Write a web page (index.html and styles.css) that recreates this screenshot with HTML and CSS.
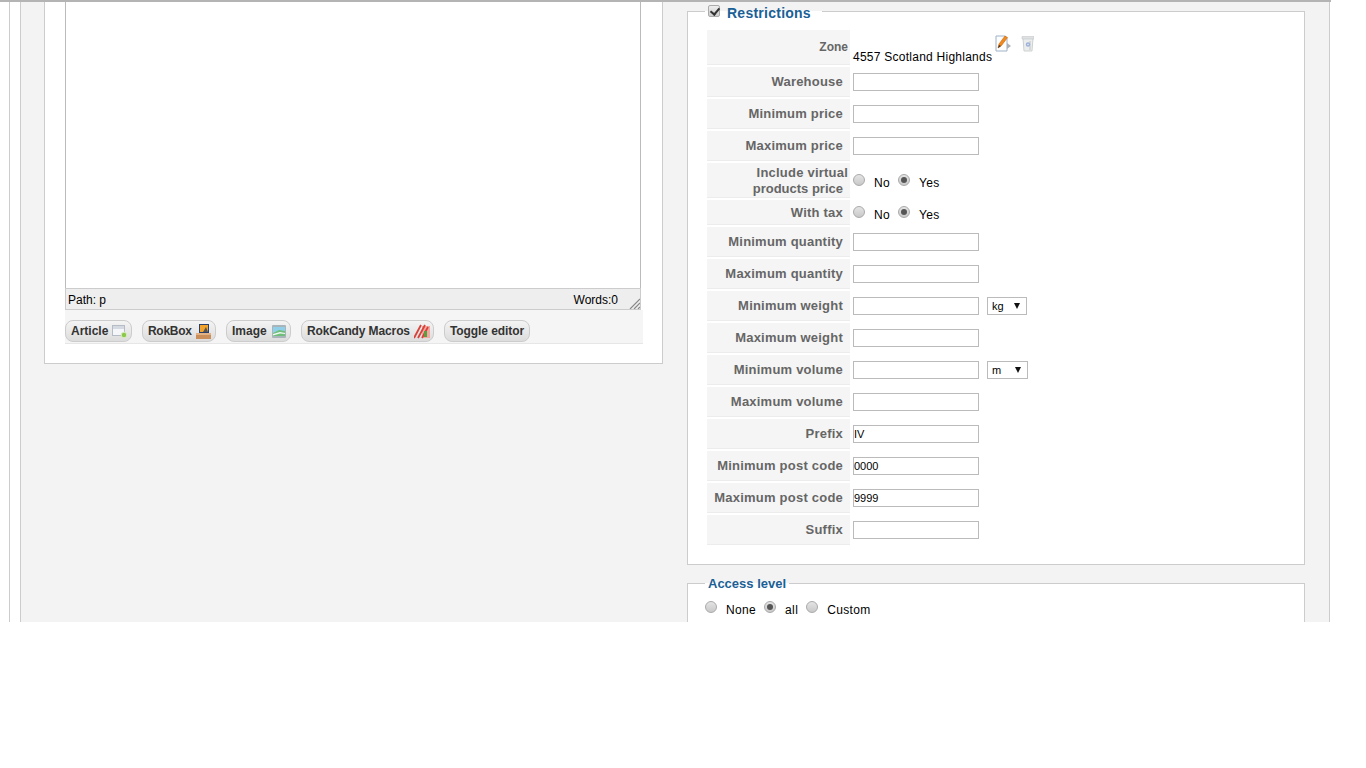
FILE: index.html
```html
<!DOCTYPE html>
<html lang="en">
<head>
<meta charset="utf-8">
<title>Shipping method</title>
<link rel="stylesheet" href="styles.css">
</head>
<body>
<div class="page">
  <div class="outer">
    <div class="main">
      <section class="left">
        <div class="panel">
          <div class="editor">
            <div class="edit-area"></div>
            <div class="statusbar">
              <span>Path: p</span>
              <span class="words">Words:0</span>
              <svg class="grip" width="11" height="11" viewBox="0 0 11 11"><path d="M11 1 1 11M11 5 5 11M11 9 9 11" stroke="#888" stroke-width="1.2" fill="none"/></svg>
            </div>
          </div>
          <div class="buttons">
            <a class="btn b-article">Article
              <svg width="15" height="14" viewBox="0 0 15 14"><rect x=".5" y="1.500" width="12" height="10" fill="#f4f6fa" stroke="#b5bcc6"/><rect x="1" y="2" width="11" height="3" fill="#d5dae2"/><circle cx="12" cy="11" r="2.800" fill="#8cc84b" stroke="#d8eebd"/></svg></a>
            <a class="btn b-rokbox">RokBox
              <svg width="15" height="15" viewBox="0 0 15 15"><rect x="3" y="0" width="10" height="9" fill="#2b3f6b"/><rect x="4" y="1" width="8" height="7" fill="#f1a32b"/><path d="M7 8l3-5 2 5z" fill="#555"/><path d="M0 9h15v6H0z" fill="#c98e5a"/><path d="M0 9h15v2H0z" fill="#e2b184"/></svg></a>
            <a class="btn b-image">Image
              <svg width="14" height="13" viewBox="0 0 14 13"><rect width="14" height="13" rx="1" fill="#a9b4ba"/><rect x="1" y="2" width="12" height="9" fill="#8fd0e8"/><path d="M1 8l6-3 6 1v5H1z" fill="#6fbf7a"/><path d="M1 9l7-2 5 1v1l-5-.5-7 2z" fill="#f2f7f2"/></svg></a>
            <a class="btn b-candy">RokCandy Macros
              <svg width="16" height="15" viewBox="0 0 16 15"><rect x="8" y="2" width="8" height="12" fill="#f2a8a0"/><path d="M0 14 7 1M4 14 11 1M8 14 14 3" stroke="#d8423a" stroke-width="1.800" fill="none"/><rect x="10" y="7" width="3" height="6" fill="#5d9c3f"/></svg></a>
            <a class="btn b-toggle">Toggle editor</a>
          </div>
        </div>
      </section>
      <section class="right">
        <fieldset class="box restrictions">
          <legend class="legend"><input class="check" type="checkbox" checked><span class="legend-main">Restrictions</span></legend>
          <table class="form">
            <tr class="r-zone">
              <th class="th-zone">Zone</th>
              <td class="td-zone">4557 Scotland Highlands
                <span class="zone-icons">
                  <svg width="17" height="17" viewBox="0 0 17 17"><path d="M1 1h9l2 2v13H1z" fill="#fdfdfd" stroke="#9fb2c8"/><path d="M12 8l4 3-4 3z" fill="#aab0b5"/><path d="M3 13l1-4 6-8 2.500 1.500-6 8z" fill="#f08a1d" stroke="#c9620c" stroke-width=".6"/><path d="M3 13l1-3 2 1z" fill="#333"/></svg>
                  <svg width="13" height="17" viewBox="0 0 13 17"><path d="M2 3h10l-1 13H3z" fill="#eceeee" stroke="#cdd1d2"/><path d="M1 1.500h12v2.500H1z" fill="#dfe2e3" stroke="#c4c8c9" stroke-width=".6"/><path d="M9 6v9" stroke="#c2c6c7"/><circle cx="7" cy="9.500" r="2.200" fill="#9db0da"/><circle cx="7" cy="9.500" r=".8" fill="#eceeee"/></svg>
                </span>
              </td>
            </tr>
            <tr><th><span class="lb">Warehouse</span></th><td><input class="text" type="text"></td></tr>
            <tr><th><span class="lb">Minimum price</span></th><td><input class="text" type="text"></td></tr>
            <tr><th><span class="lb">Maximum price</span></th><td><input class="text" type="text"></td></tr>
            <tr class="r-virtual">
              <th class="th-virtual">Include virtual<br><span class="lb lb-tight">products price</span></th>
              <td class="td-virtual"><input class="radio" type="radio" name="v"><label class="opt">No</label><input class="radio" type="radio" name="v" checked><label class="opt">Yes</label></td>
            </tr>
            <tr class="r-tax">
              <th class="th-tax"><span class="lb">With tax</span></th>
              <td class="td-tax"><input class="radio" type="radio" name="t"><label class="opt">No</label><input class="radio" type="radio" name="t" checked><label class="opt">Yes</label></td>
            </tr>
            <tr><th><span class="lb">Minimum quantity</span></th><td><input class="text" type="text"></td></tr>
            <tr><th><span class="lb">Maximum quantity</span></th><td><input class="text" type="text"></td></tr>
            <tr><th><span class="lb">Minimum weight</span></th><td><input class="text" type="text"><span class="sel sel-kg">kg</span></td></tr>
            <tr><th><span class="lb">Maximum weight</span></th><td><input class="text" type="text"></td></tr>
            <tr><th><span class="lb">Minimum volume</span></th><td><input class="text" type="text"><span class="sel sel-m">m</span></td></tr>
            <tr><th><span class="lb">Maximum volume</span></th><td><input class="text" type="text"></td></tr>
            <tr><th><span class="lb">Prefix</span></th><td><input class="text" type="text" value="IV"></td></tr>
            <tr><th><span class="lb">Minimum post code</span></th><td><input class="text" type="text" value="0000"></td></tr>
            <tr><th><span class="lb">Maximum post code</span></th><td><input class="text" type="text" value="9999"></td></tr>
            <tr><th><span class="lb">Suffix</span></th><td><input class="text" type="text"></td></tr>
          </table>
        </fieldset>
        <fieldset class="box access">
          <legend class="legend legend-access">Access level</legend>
          <div class="access-row"><input class="radio" type="radio" name="a"><label class="opt">None</label><input class="radio" type="radio" name="a" checked><label class="opt">all</label><input class="radio" type="radio" name="a"><label class="opt">Custom</label></div>
        </fieldset>
      </section>
    </div>
  </div>
</div>
</body>
</html>
```
FILE: styles.css
```css
* { box-sizing: border-box; }
html, body { margin: 0; padding: 0; background: #fff; }
body { font-family: "Liberation Sans", Arial, sans-serif; font-size: 12px; color: #000; }
.page { width: 1331px; height: 622px; overflow: hidden; border-top: 2px solid #b4b4b4; padding-left: 9px; }
.outer { height: 700px; width: 1321px; border-left: 1px solid #ccc; padding-left: 10px; }
.main { height: 700px; width: 1310px; background: #f3f3f3; border-left: 1px solid #ccc; border-right: 1px solid #ccc; display: flex; align-items: flex-start; padding-left: 23px; }
.left { width: 619px; flex: none; }
.panel { height: 362px; background: #fff; border: 1px solid #ccc; border-top: 0; padding-left: 20px; }
.editor { width: 576px; }
.edit-area { height: 286px; background: #fff; border-left: 1px solid #bbb; border-right: 1px solid #bbb; }
.statusbar { height: 22px; background: #eee; border: 1px solid #ccc; display: flex; align-items: center; padding: 1px 0 0 2px; position: relative; }
.words { margin-left: auto; margin-right: 22px; }
.grip { position: absolute; right: 0; bottom: 0; }
.buttons { width: 578px; height: 34px; background: #f5f5f5; border-bottom: 1px solid #e6e6e6; display: flex; gap: 10px; padding-top: 10px; }
.btn { height: 22px; display: flex; align-items: center; padding: 0 4px 0 5px; border: 1px solid #ccc; border-radius: 8px; background: linear-gradient(#f4f4f4, #dcdcdc); font-weight: bold; color: #333; white-space: nowrap; justify-content: space-between; }
.b-article { width: 67px; }
.b-rokbox { width: 74px; letter-spacing: -.3px; }
.b-image { width: 65px; }
.b-candy { width: 133px; letter-spacing: -.12px; padding-right: 3px; }
.b-toggle { width: 86px; letter-spacing: -.08px; }
.right { margin-left: 24px; width: 618px; flex: none; padding-top: 2px; }
.box { margin: 0; border: 1px solid #ccc; background: #fff; padding: 0 0 0 19px; min-width: 0; }
.restrictions { height: 561px; margin-bottom: 11px; }
.access { height: 100px; padding-left: 17px; }
.legend { padding: 0 3px; margin-left: -2px; color: #1a6096; font-weight: bold; font-size: 13px; display: flex; align-items: center; height: 15px; }
.legend-main { font-size: 14px; margin: 2px 8px 0 7px; letter-spacing: .25px; }
.legend-access { margin-left: 0; padding: 0 3px; }
.check { appearance: none; width: 12px; height: 12px; margin: 0 0 1px 0; border: 1px solid #aaa; border-radius: 2px; background: linear-gradient(#eee, #ccc); position: relative; }
.check::after { content: ""; position: absolute; left: 3px; top: 0; width: 4px; height: 7px; border: solid #333; border-width: 0 2px 2px 0; transform: rotate(40deg); }
.form { border-collapse: separate; border-spacing: 0 2px; margin-top: 9px; }
.form tr { height: 30px; }
.form th { width: 143px; background: #f5f5f5; border-bottom: 1px solid #ececec; text-align: right; font-size: 13px; font-weight: bold; color: #666; padding: 0 2px 0 0; line-height: 16px; letter-spacing: .22px; }
.lb { padding-right: 5px; }
.lb-tight { letter-spacing: 0; }
.form th.th-virtual { padding-top: 1px; }
.form th.th-tax { padding-top: 1px; }
.form td { padding: 0 0 0 3px; vertical-align: middle; white-space: nowrap; }
.form tr.r-zone { height: 35px; }
.form .th-zone { font-size: 12px; letter-spacing: 0; }
.form td.td-zone { vertical-align: bottom; padding-bottom: 1px; letter-spacing: .25px; }
.zone-icons { display: inline-flex; gap: 9px; vertical-align: 9px; margin-left: -1px; }
.form tr.r-virtual { height: 35px; }
.form tr.r-tax { height: 25px; }
.form td.td-virtual { padding-top: 2px; }
.form td.td-tax { padding-top: 2px; }
.text { width: 126px; height: 18px; border: 1px solid #bbb; background: #fff; padding: 0; margin: 0; font: 11px "Liberation Sans", Arial, sans-serif; color: #000; vertical-align: middle; display: inline-block; }
.radio { appearance: none; width: 12px; height: 12px; margin: 0 9px 0 0; border: 1px solid #aaa; border-radius: 50%; background: linear-gradient(#e4e4e4, #c8c8c8); vertical-align: 1px; position: relative; display: inline-block; }
.radio:checked::after { content: ""; position: absolute; left: 2px; top: 2px; width: 6px; height: 6px; border-radius: 50%; background: #555; }
.opt { font-size: 12px; margin-right: 8px; letter-spacing: .35px; }
.sel { display: inline-block; height: 18px; border: 1px solid #bbb; background: #fff; margin-left: 8px; vertical-align: middle; font-size: 11px; line-height: 16px; padding-left: 4px; position: relative; }
.sel::after { content: ""; position: absolute; right: 6px; top: 5px; border: solid transparent; border-width: 6px 3.500px 0; border-top-color: #111; }
.sel-kg { width: 40px; }
.sel-m { width: 41px; }
.access-row { padding-top: 10px; white-space: nowrap; }
```
